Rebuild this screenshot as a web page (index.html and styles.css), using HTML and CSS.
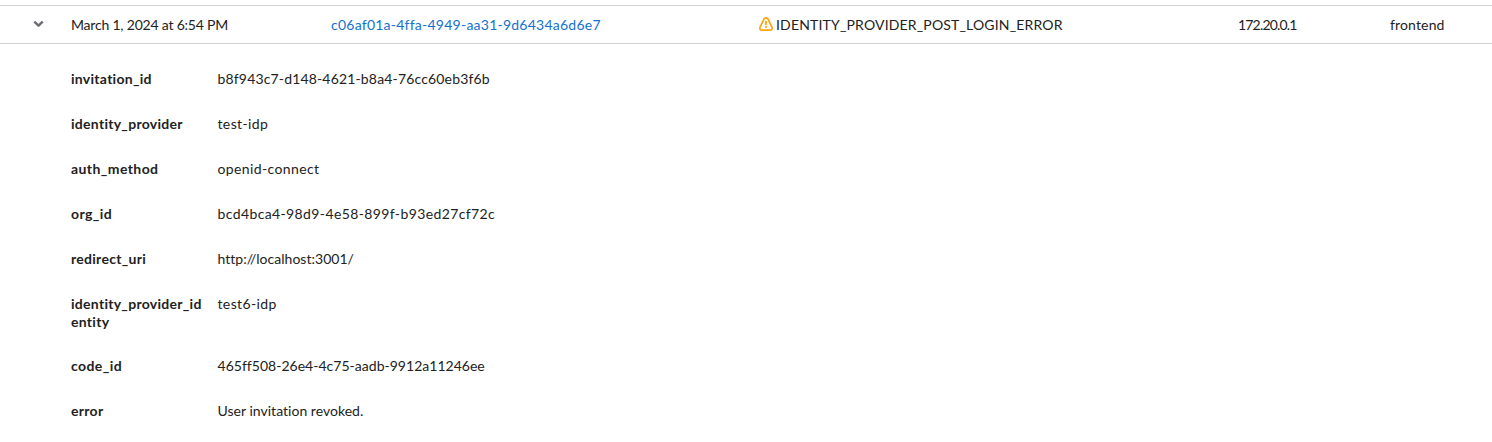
FILE: index.html
```html
<!DOCTYPE html>
<html lang="en">
<head>
<meta charset="utf-8">
<title>User events</title>
<link rel="stylesheet" href="styles.css">
</head>
<body>
<main class="events">
  <div class="event-row">
    <button class="toggle" aria-label="Details" aria-expanded="true">
      <svg class="chevron" viewBox="0 0 11 8" width="11" height="8"><path d="M1.3 1.7 5.5 5.7 9.7 1.7" fill="none" stroke="#6a6e73" stroke-width="2.5" stroke-linejoin="round"/></svg>
    </button>
    <span class="time">March 1, 2024 at 6:54 PM</span>
    <span class="user"><a class="user-link">c06af01a-4ffa-4949-aa31-9d6434a6d6e7</a></span>
    <span class="type">
      <svg class="warning" viewBox="0 0 14 14" width="14" height="14"><path d="M5.1 1.8Q7 .1 8.9 1.8L12.9 10.2Q13.7 12.9 11.6 13.05H2.4Q.3 12.9 1.1 10.2Z" fill="none" stroke="#fca40c" stroke-width="1.7" stroke-linejoin="round"/><path d="M6 3.9h2l-.2 4.4H6.2z" fill="#fca40c"/><circle cx="7" cy="10.1" r="1.1" fill="#fca40c"/></svg>
      <span class="type-name">IDENTITY_PROVIDER_POST_LOGIN_ERROR</span>
    </span>
    <span class="ip">172.20.0.1</span>
    <span class="client">frontend</span>
  </div>
  <dl class="details">
    <div class="detail"><dt class="term">invitation_id</dt><dd class="value snug">b8f943c7-d148-4621-b8a4-76cc60eb3f6b</dd></div>
    <div class="detail"><dt class="term">identity_provider</dt><dd class="value wide">test-idp</dd></div>
    <div class="detail"><dt class="term loose">auth_method</dt><dd class="value wide">openid-connect</dd></div>
    <div class="detail"><dt class="term loose">org_id</dt><dd class="value wide">bcd4bca4-98d9-4e58-899f-b93ed27cf72c</dd></div>
    <div class="detail"><dt class="term">redirect_uri</dt><dd class="value">http://localhost:3001/</dd></div>
    <div class="detail"><dt class="term">identity_provider_identity</dt><dd class="value wide">test6-idp</dd></div>
    <div class="detail"><dt class="term loose">code_id</dt><dd class="value">465ff508-26e4-4c75-aadb-9912a11246ee</dd></div>
    <div class="detail"><dt class="term">error</dt><dd class="value">User invitation revoked.</dd></div>
  </dl>
</main>
</body>
</html>
```
FILE: styles.css
```css
* { box-sizing: border-box; }
body {
  margin: 0;
  background: #fff;
  color: #222;
  font: 14px/21px Lato, "Liberation Sans", sans-serif;
  font-variant-ligatures: none;
}
.events { padding-top: 5px; }
.event-row {
  display: grid;
  grid-template-columns: 71px 259px 429px 479px 152px 1fr;
  align-items: center;
  height: 39px;
  border-top: 1px solid #d2d2d2;
  border-bottom: 1px solid #d2d2d2;
  white-space: nowrap;
}
.toggle {
  display: flex;
  padding: 0 0 1px 33px;
  border: 0;
  background: none;
}
.time { letter-spacing: -0.2px; }
.user-link { color: #1371d0; letter-spacing: 0.24px; }
.user { padding-left: 1px; }
.type { display: flex; align-items: center; gap: 2px; }
.warning { flex: none; margin-bottom: 2px; }
.type-name { padding-left: 1px; letter-spacing: 0.17px; }
.ip { letter-spacing: -0.82px; }
.client { letter-spacing: 0.15px; }
.details {
  display: grid;
  gap: 24px;
  margin: 0;
  padding: 25px 0 0 71px;
}
.detail {
  display: grid;
  grid-template-columns: 133px 1fr;
  column-gap: 13.5px;
  align-items: start;
}
.term {
  padding: 1px 0 2px;
  font-weight: 700;
  line-height: 18px;
  letter-spacing: 0.28px;
  overflow-wrap: anywhere;
}
.detail:nth-child(6) .term { padding-bottom: 1px; }
.loose { letter-spacing: 0.42px; }
.value { margin: 0; line-height: 19px; letter-spacing: 0.02px; }
.snug { letter-spacing: 0.16px; }
.wide { letter-spacing: 0.38px; }
```
